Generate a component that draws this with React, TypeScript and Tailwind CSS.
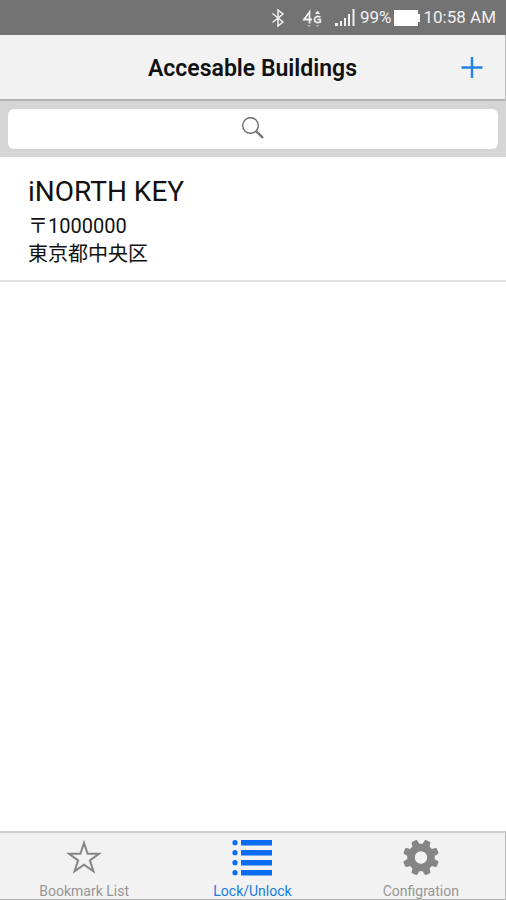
import type { ReactNode } from "react";

type Building = { name: string; postalCode: string; address: string };

const buildings: Building[] = [{ name: "iNORTH KEY", postalCode: "〒1000000", address: "東京都中央区" }];

const gearTeeth = [22.5, 67.5, 112.5, 157.5, 202.5, 247.5, 292.5, 337.5];

function StatusBar() {
  return (
    <div className="flex h-[35px] items-center justify-end bg-[#737373] pt-px pr-[10px] text-[17px] text-[#f0f0f0]">
      <svg className="mr-4 h-5 w-4" viewBox="0 0 16 20" fill="none" stroke="currentColor" strokeWidth="1.5">
        <path d="M2.500 5.500 13 14 8 18V2L13 6 2.500 14.500" />
      </svg>
      <svg className="mr-3 h-5 w-5" viewBox="0 0 20 20" fill="none" stroke="currentColor" strokeWidth="1.8">
        <path d="M7.500 15.500V4L2 11.500h8" />
        <path d="M18.500 9.200c-3.500-1.800-6-.3-6 2.300s2.800 4 5.800 2.400v-2.400h-3" strokeWidth="1.700" />
        <path d="M15.500 2.500 18 6h-5z" fill="currentColor" stroke="none" />
        <path d="M5 17h4l-2 2.500zM13.500 17h4l-2 2.500z" fill="#a5a5a5" stroke="none" />
      </svg>
      <svg className="mr-1 h-5 w-[22px]" viewBox="0 0 22 20" fill="currentColor">
        <path d="M1 15h3v3H1zM6 13h2v5H6zM10 10h2v8h-2zM14 6h2v12h-2zM18.500 1h2v17h-2z" />
      </svg>
      <span>99%</span>
      <svg className="mr-1 ml-0.5 h-4 w-[26px]" viewBox="0 0 26 16" fill="#fff">
        <path d="M0 0h24v4h2v8h-2v4H0z" />
      </svg>
      <span>10:58 AM</span>
    </div>
  );
}

function Tab({ label, active, children }: { label: string; active?: boolean; children: ReactNode }) {
  return (
    <a
      href="#"
      aria-current={active ? "page" : undefined}
      className={`flex flex-col items-center pt-1 text-sm leading-4 ${active ? "text-[#147de0]" : "text-[#969696]"}`}
    >
      {children}
      <span className="mt-0.5">{label}</span>
    </a>
  );
}

export default function App() {
  return (
    <div className="flex min-h-screen flex-col bg-white font-[Roboto,'Noto_Sans_CJK_JP',sans-serif] text-[#111]">
      <StatusBar />

      <header className="grid h-[66px] grid-cols-[56px_1fr_56px] items-center border-r border-b-2 border-r-[#b8b8b8] border-b-[#b2b2b2] bg-[#f2f2f2] px-1 pt-1">
        <h1 className="col-start-2 text-center text-[23px] font-semibold">Accesable Buildings</h1>
        <button type="button" aria-label="Add building" className="flex justify-center text-[#2383e8]">
          <svg className="h-6 w-6" viewBox="0 0 24 24" fill="none" stroke="currentColor" strokeWidth="2.4">
            <path d="M11 0v21M.500 10.500h21" />
          </svg>
        </button>
      </header>

      <div className="bg-[#d5d5d5] p-2">
        <div className="relative">
          <input
            type="search"
            aria-label="Search buildings"
            className="block h-10 w-full rounded-md bg-white px-3 text-center text-lg outline-none"
          />
          <svg
            className="pointer-events-none absolute inset-0 m-auto h-6 w-6"
            viewBox="0 0 24 24"
            fill="none"
            stroke="#737373"
          >
            <circle cx="9.500" cy="8.500" r="7.800" strokeWidth="1.500" />
            <path d="m15 14 7 7" strokeWidth="2.400" />
          </svg>
        </div>
      </div>

      <main className="flex-1">
        <ul>
          {buildings.map((b) => (
            <li key={b.name} className="border-b-2 border-[#e0e0e0] px-7 pt-[15px] pb-3">
              <div className="text-[28px] leading-10">{b.name}</div>
              <div className="text-xl leading-7">{b.postalCode}</div>
              <div className="text-xl leading-7">{b.address}</div>
            </li>
          ))}
        </ul>
      </main>

      <nav className="grid grid-cols-3 border-t-2 border-r border-b border-t-[#cfcfcf] border-r-[#b8b8b8] border-b-[#b2b2b2] bg-[#f2f2f2]">
        <Tab label="Bookmark List">
          <svg className="h-11 w-11" viewBox="0 0 44 44" fill="none" stroke="#858585" strokeWidth="2">
            <path d="m22 6 3.600 10.700H37L27.900 23.400 31.400 34.200 22 27.600 12.600 34.200 16.100 23.400 7 16.700H18.400z" />
          </svg>
        </Tab>
        <Tab label="Lock/Unlock" active>
          <svg className="h-11 w-11" viewBox="0 0 44 44" fill="#0a6cf0">
            <path d="M11 3h31v5.500H11zM11 13h31v5.500H11zM11 23h31v5.500H11zM11 33h31v5.500H11z" />
            <circle cx="5" cy="5.700" r="2.600" />
            <circle cx="5" cy="15.700" r="2.600" />
            <circle cx="5" cy="25.700" r="2.600" />
            <circle cx="5" cy="35.700" r="2.600" />
          </svg>
        </Tab>
        <Tab label="Configration">
          <svg className="h-11 w-11" viewBox="0 0 44 44" fill="#858585">
            <circle cx="22" cy="20.500" r="10" fill="none" stroke="#858585" strokeWidth="7.500" />
            {gearTeeth.map((angle) => (
              <path
                key={angle}
                d="M18 9 18.800 3.600Q19 2.500 20 2.500h4Q25 2.500 25.200 3.600L26 9z"
                transform={`rotate(${angle} 22 20.5)`}
              />
            ))}
          </svg>
        </Tab>
      </nav>
    </div>
  );
}
